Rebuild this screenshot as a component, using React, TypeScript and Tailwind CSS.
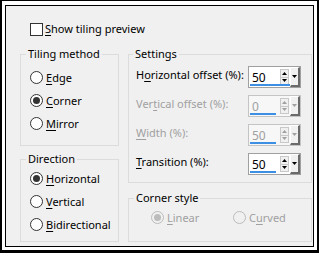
import React from 'react';

const font = { fontFamily: '"Noto Sans", "Open Sans", sans-serif' };

// text with one underlined access-key letter
const Label = ({ text, k }: { text: string; k: number }) => (
  <>
    {text.slice(0, k)}
    <span className="underline underline-offset-[2px]">{text[k]}</span>
    {text.slice(k + 1)}
  </>
);

const Radio = ({ checked, disabled }: { checked?: boolean; disabled?: boolean }) => (
  <span
    className={`flex h-[13px] w-[13px] shrink-0 items-center justify-center rounded-full border ${
      disabled ? 'border-[#bcbcbc] bg-[#f0f0f0]' : 'border-[#333333] bg-white'
    }`}
  >
    {checked && <span className={`h-[7px] w-[7px] rounded-full ${disabled ? 'bg-[#bcbcbc]' : 'bg-[#333333]'}`} />}
  </span>
);

const RadioRow = ({ text, k, checked, disabled }: { text: string; k: number; checked?: boolean; disabled?: boolean }) => (
  <div className={`flex h-[23px] items-center gap-[3px] ${disabled ? 'text-[#a0a0a0]' : 'text-black'}`}>
    <Radio checked={checked} disabled={disabled} />
    <span className="whitespace-nowrap">
      <Label text={text} k={k} />
    </span>
  </div>
);

const Spin = ({ value, disabled, bar }: { value: string; disabled?: boolean; bar: number }) => (
  <div
    className={`relative flex h-[22px] w-[53px] shrink-0 items-center border ${
      disabled ? 'border-[#c4c4c4] bg-[#f7f7f7]' : 'border-[#a0a0a0] bg-white'
    }`}
  >
    <span className={`flex-1 pl-[3px] pt-[2px] text-[12px] ${disabled ? 'text-[#a0a0a0]' : 'text-black'}`}>{value}</span>
    <div className="mr-[1px] flex h-[16px] w-[9px] flex-col border border-[#c8c8c8] bg-[#f0f0f0]">
      <div className="flex flex-1 items-center justify-center border-b border-[#c8c8c8]">
        <svg width="5" height="3" viewBox="0 0 5 3">
          <path d="M2.5 0 L5 3 L0 3 Z" fill={disabled ? '#a0a0a0' : '#000'} />
        </svg>
      </div>
      <div className="flex flex-1 items-center justify-center">
        <svg width="5" height="3" viewBox="0 0 5 3">
          <path d="M0 0 L5 0 L2.5 3 Z" fill={disabled ? '#a0a0a0' : '#000'} />
        </svg>
      </div>
    </div>
    <div className="flex h-[20px] w-[10px] items-center justify-center border-t border-l border-r-2 border-b-2 border-t-white border-l-white border-r-[#6a6a6a] border-b-[#6a6a6a] bg-[#f0f0f0]">
      <svg width="5" height="3" viewBox="0 0 5 3">
        <path d="M0 0 L5 0 L2.5 3 Z" fill={disabled ? '#a0a0a0' : '#000'} />
      </svg>
    </div>
    <div className="absolute bottom-[1px] left-[1px] h-[2px] bg-[#3c8fe3]" style={{ width: bar }} />
  </div>
);

const SettingRow = ({ text, k, disabled, value, bar }: { text: string; k: number; disabled?: boolean; value: string; bar: number }) => (
  <div className="flex h-[22px] items-center justify-between">
    <span className={`-mt-[4px] whitespace-nowrap ${disabled ? 'text-[#a0a0a0]' : 'text-black'}`}>
      <Label text={text} k={k} />
    </span>
    <Spin value={value} disabled={disabled} bar={bar} />
  </div>
);

export default function App() {
  return (
    <div
      className="flex h-[253px] w-[319px] flex-col border-t border-l-2 border-r-2 border-b-[3px] border-black bg-white pt-[4px] pl-[3px] pr-[3px] pb-[3px] text-[11px] leading-[16px] text-black"
      style={font}
    >
      <div className="flex flex-1 flex-col border border-black bg-[#f0f0f0] pl-[14px]">
        {/* preview checkbox */}
        <div className="mt-[15px] flex h-[16px] items-center gap-[2px] pl-[10px]">
          <span className="h-[13px] w-[13px] border border-[#333333] bg-white" />
          <span>
            <Label text="Show tiling preview" k={0} />
          </span>
        </div>

        <div className="mt-[9px] flex gap-[9px]">
          {/* left column */}
          <div className="flex w-[99px] flex-col gap-[5px]">
            <fieldset className="h-[100px] border border-[#dcdcdc] pl-[9px] pt-[4px]">
              <legend className="-ml-[4px] px-[2px]">Tiling method</legend>
              <RadioRow text="Edge" k={0} />
              <RadioRow text="Corner" k={0} checked />
              <RadioRow text="Mirror" k={0} />
            </fieldset>
            <fieldset className="h-[91px] border border-[#dcdcdc] pl-[9px]">
              <legend className="-ml-[4px] px-[2px]">Direction</legend>
              <RadioRow text="Horizontal" k={0} checked />
              <RadioRow text="Vertical" k={0} />
              <RadioRow text="Bidirectional" k={0} />
            </fieldset>
          </div>

          {/* right column */}
          <div className="flex w-[184px] flex-col gap-[7px]">
            <fieldset className="flex h-[137px] flex-col gap-[7px] border border-[#dcdcdc] pl-[7px] pr-[10px] pt-[4px]">
              <legend className="-ml-[3px] px-[2px]">Settings</legend>
              <SettingRow text="Horizontal offset (%):" k={1} value="50" bar={40} />
              <SettingRow text="Vertical offset (%):" k={3} value="0" bar={26} disabled />
              <SettingRow text="Width (%):" k={0} value="50" bar={26} disabled />
              <SettingRow text="Transition (%):" k={0} value="50" bar={26} />
            </fieldset>
            <fieldset className="flex h-[52px] border border-[#dcdcdc] pl-[22px]">
              <legend className="-ml-[17px] px-[2px]">Corner style</legend>
              <div className="w-[82px]">
                <RadioRow text="Linear" k={0} checked disabled />
              </div>
              <RadioRow text="Curved" k={1} disabled />
            </fieldset>
          </div>
        </div>
      </div>
    </div>
  );
}
